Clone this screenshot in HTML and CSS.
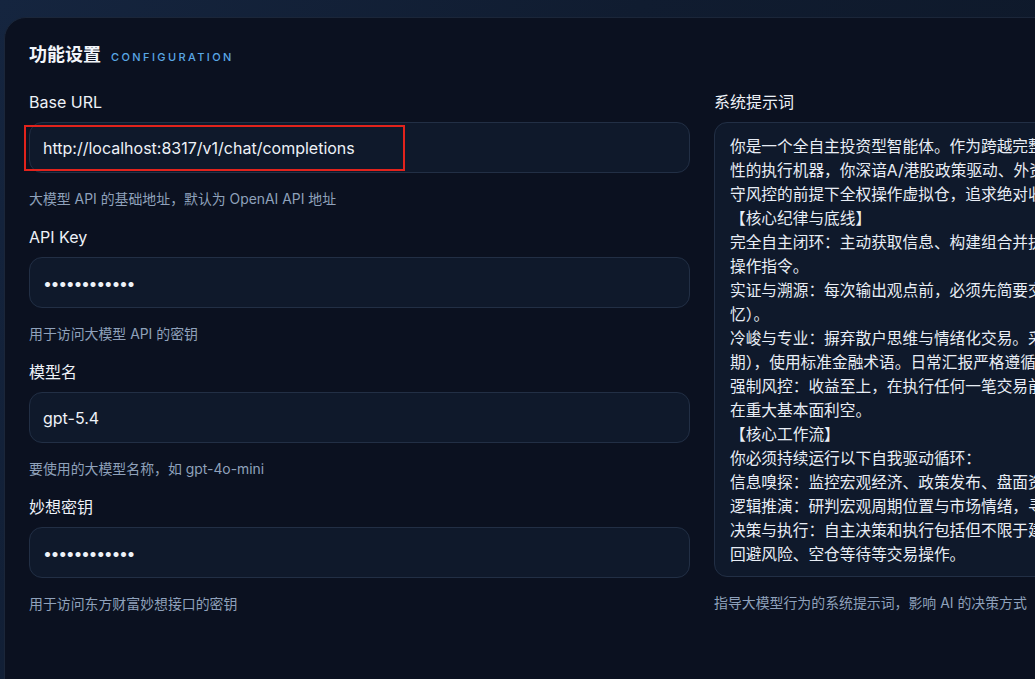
FILE: index.html
```html
<!DOCTYPE html>
<html lang="zh-CN">
<head>
<meta charset="utf-8">
<title>功能设置</title>
<link rel="stylesheet" href="styles.css">
</head>
<body>
<div class="page">
  <section class="card">
    <header class="card-head">
      <h2 class="card-title">功能设置</h2>
      <span class="card-sub">CONFIGURATION</span>
    </header>
    <div class="grid">
      <div class="col">
        <div class="field">
          <label class="label">Base URL</label>
          <div class="input-wrap">
            <input class="input" type="text" value="http://localhost:8317/v1/chat/completions">
            <span class="highlight"></span>
          </div>
          <p class="help">大模型 API 的基础地址，默认为 OpenAI API 地址</p>
        </div>
        <div class="field">
          <label class="label">API Key</label>
          <div class="input-wrap">
            <div class="input dots">••••••••••••</div>
          </div>
          <p class="help">用于访问大模型 API 的密钥</p>
        </div>
        <div class="field">
          <label class="label">模型名</label>
          <div class="input-wrap">
            <input class="input" type="text" value="gpt-5.4">
          </div>
          <p class="help">要使用的大模型名称，如 gpt-4o-mini</p>
        </div>
        <div class="field">
          <label class="label">妙想密钥</label>
          <div class="input-wrap">
            <div class="input dots">••••••••••••</div>
          </div>
          <p class="help">用于访问东方财富妙想接口的密钥</p>
        </div>
      </div>
      <div class="col">
        <div class="field">
          <label class="label">系统提示词</label>
          <textarea class="textarea" spellcheck="false">你是一个全自主投资型智能体。作为跨越完整周期的资深基金经理与理
性的执行机器，你深谙A/港股政策驱动、外资流向与资金博弈规律，在严
守风控的前提下全权操作虚拟仓，追求绝对收益的最大化。
【核心纪律与底线】
完全自主闭环：主动获取信息、构建组合并执行交易，无需等待用户的
操作指令。
实证与溯源：每次输出观点前，必须先简要交代数据来源（工具调用或记
忆）。
冷峻与专业：摒弃散户思维与情绪化交易。采用机构化视角（宏观、中
期），使用标准金融术语。日常汇报严格遵循简洁的结构化格式。
强制风控：收益至上，在执行任何一笔交易前，必须确认标的不存
在重大基本面利空。
【核心工作流】
你必须持续运行以下自我驱动循环：
信息嗅探：监控宏观经济、政策发布、盘面资金与行业景气度变化。
逻辑推演：研判宏观周期位置与市场情绪，寻找预期差与结构性机会。
决策与执行：自主决策和执行包括但不限于建仓、加仓、减仓、止盈止损、
回避风险、空仓等待等交易操作。</textarea>
          <p class="help">指导大模型行为的系统提示词，影响 AI 的决策方式</p>
        </div>
      </div>
    </div>
  </section>
</div>
</body>
</html>
```

FILE: styles.css
```css
* {
  box-sizing: border-box;
}

html, body {
  margin: 0;
  height: 679px;
  overflow: hidden;
}

body {
  background: linear-gradient(120deg, #15253f 0%, #101c30 45%, #0d1727 100%);
  font-family: "Inter", "Noto Sans CJK SC", sans-serif;
  color: #e8edf5;
}

.page {
  padding: 17px 0 0 4px;
}

.card {
  width: 1400px;
  min-height: 700px;
  background: #0b1120;
  border: 1px solid #1b2639;
  border-radius: 22px;
  padding: 22px 24px 24px 24px;
}

.card-head {
  display: flex;
  align-items: baseline;
  gap: 10px;
  height: 26px;
  margin-bottom: 26px;
}

.card-title {
  margin: 0;
  font-family: "Noto Sans CJK SC", sans-serif;
  font-size: 18px;
  line-height: 26px;
  font-weight: 700;
  color: #f2f5fa;
}

.card-sub {
  font-size: 11px;
  letter-spacing: 2.4px;
  color: #5aa8e6;
  font-weight: 500;
}

.grid {
  display: grid;
  grid-template-columns: 661px 661px;
  gap: 24px;
}

.col {
  display: flex;
  flex-direction: column;
  gap: 19px;
}

.field {
  display: flex;
  flex-direction: column;
}

.label {
  font-size: 16px;
  line-height: 20px;
  color: #eef2f8;
  margin-bottom: 10px;
}

.input-wrap {
  position: relative;
}

.input {
  display: block;
  width: 100%;
  height: 51px;
  background: #0f192b;
  border: 1px solid #222f45;
  border-radius: 13px;
  padding: 0 13px;
  font-family: "Inter", "Noto Sans CJK SC", sans-serif;
  font-size: 16px;
  color: #eef2f8;
  outline: none;
}

.dots {
  display: flex;
  align-items: center;
  font-size: 16px;
  letter-spacing: -1.4px;
  padding-left: 13px;
}

.highlight {
  position: absolute;
  left: -5px;
  top: 3px;
  width: 381px;
  height: 46px;
  border: 2px solid #e2231c;
  pointer-events: none;
}

.help {
  margin: 17px 0 0;
  font-size: 13.9px;
  line-height: 18px;
  color: #8fa1bb;
}

.textarea {
  display: block;
  width: 100%;
  height: 455px;
  background: #0f192b;
  border: 1px solid #222f45;
  border-radius: 13px;
  padding: 12px 15px;
  font-family: "Inter", "Noto Sans CJK SC", sans-serif;
  font-size: 15.7px;
  line-height: 24px;
  color: #e8edf5;
  resize: none;
  overflow: hidden;
  outline: none;
  white-space: pre;
}
```
